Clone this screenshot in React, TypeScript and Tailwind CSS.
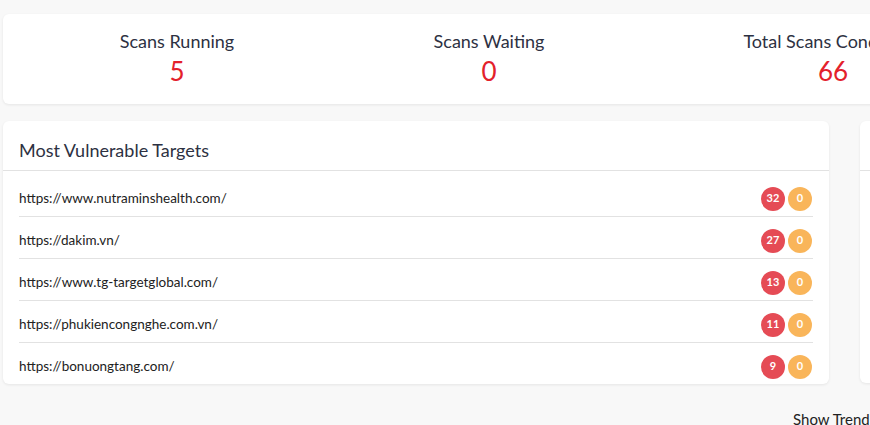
const targets = [
  { url: "https://www.nutraminshealth.com/", high: 32, medium: 0 },
  { url: "https://dakim.vn/", high: 27, medium: 0 },
  { url: "https://www.tg-targetglobal.com/", high: 13, medium: 0 },
  { url: "https://phukiencongnghe.com.vn/", high: 11, medium: 0 },
  { url: "https://bonuongtang.com/", high: 9, medium: 0 },
];

const stats = [
  { label: "Scans Running", value: 5, width: "w-[348px]" },
  { label: "Scans Waiting", value: 0, width: "w-[276px]" },
  { label: "Total Scans Conducted", value: 66, width: "w-[412px]" },
];

export default function App() {
  return (
    <div className="h-[425px] w-[870px] overflow-hidden bg-[#f8f8f8] text-[#2d3142] font-['Lato','Liberation_Sans',sans-serif]">
      <div className="w-[1200px] pl-[3px] pt-[14px]">
        {/* Scan stats */}
        <div className="flex h-[90px] rounded-md bg-white shadow-[0_1px_3px_rgba(0,0,0,0.08)]">
          {stats.map((s) => (
            <div key={s.label} className={`${s.width} shrink-0 pt-[15px] text-center`}>
              <div className="text-[18px] leading-[24px]">{s.label}</div>
              <div className="mt-[3px] text-[26px] leading-[30px] text-[#e3212b]">{s.value}</div>
            </div>
          ))}
        </div>

        <div className="mt-[17px] flex gap-[31px]">
          {/* Most Vulnerable Targets */}
          <div className="w-[826px] shrink-0 rounded-md bg-white shadow-[0_1px_3px_rgba(0,0,0,0.08)]">
            <div className="h-[50px] border-b border-[#e2e2e2] px-[16px] pt-[17px] text-[18px] leading-[24px]">
              Most Vulnerable Targets
            </div>
            <div className="px-[16px] pt-[4px]">
              {targets.map((t, i) => (
                <div
                  key={t.url}
                  className={`flex items-center justify-between pt-[6px] ${
                    i < targets.length - 1 ? "h-[42px] border-b border-[#e2e2e2]" : "h-[41px]"
                  }`}
                >
                  <span className="text-[13.5px] text-[#222]">{t.url}</span>
                  <div className="flex gap-[3px] pr-[1px]">
                    <span className="flex h-[24px] w-[24px] items-center justify-center rounded-full bg-[#e54b55] text-[11px] font-bold text-white">
                      {t.high}
                    </span>
                    <span className="flex h-[24px] w-[24px] items-center justify-center rounded-full bg-[#f9b55a] text-[11px] font-bold text-white">
                      {t.medium}
                    </span>
                  </div>
                </div>
              ))}
            </div>
          </div>

          {/* Next card (cut off) */}
          <div className="h-[262px] w-[300px] shrink-0 rounded-md bg-white shadow-[0_1px_3px_rgba(0,0,0,0.08)]">
            <div className="h-[50px] border-b border-[#e2e2e2]" />
          </div>
        </div>

        <div className="mt-[25px] pl-[790px] text-[15px] leading-[20px] text-[#222]">Show Trends</div>
      </div>
    </div>
  );
}
